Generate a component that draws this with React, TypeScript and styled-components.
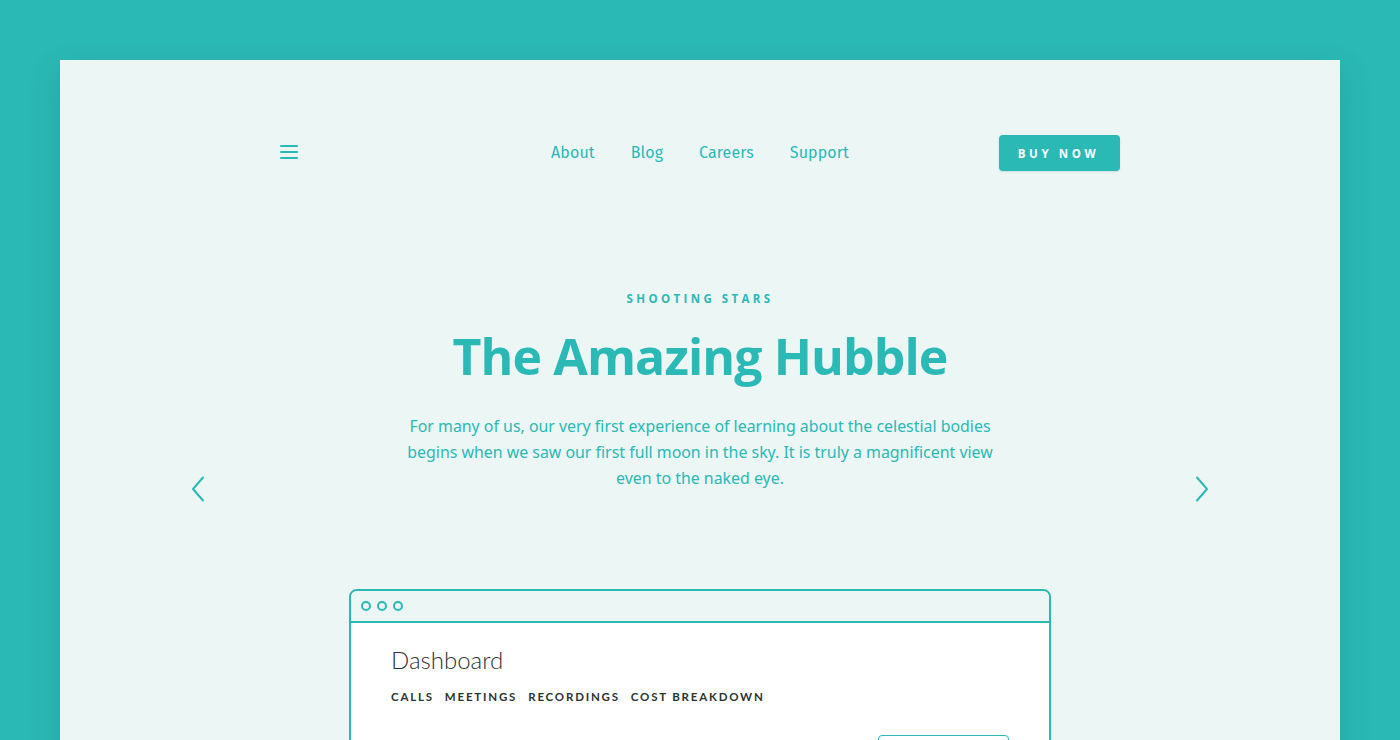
import React from "react";
import styled, { createGlobalStyle } from "styled-components";

const teal = "#2bb9b6";

const Global = createGlobalStyle`
  html, body { margin: 0; padding: 0; }
  body {
    background: ${teal};
    font-family: "Fira Sans", "Open Sans", "Noto Sans", sans-serif;
    overflow: hidden;
  }
`;

const Page = styled.div`
  width: 1400px;
  height: 740px;
  padding: 60px 60px 0;
  box-sizing: border-box;
  overflow: hidden;
`;

const Card = styled.div`
  background: #ecf6f5;
  height: 760px;
  box-shadow: 0 10px 30px rgba(0, 70, 70, 0.18);
  display: flex;
  flex-direction: column;
  align-items: center;
`;

const Nav = styled.nav`
  width: 840px;
  margin-top: 75px;
  height: 36px;
  display: grid;
  grid-template-columns: 1fr auto 1fr;
  align-items: center;
`;

const Burger = styled.button`
  justify-self: start;
  background: none;
  border: 0;
  padding: 0;
  width: 18px;
  height: 14px;
  margin-top: -2px;
  display: flex;
  flex-direction: column;
  justify-content: space-between;
  cursor: pointer;
  span {
    display: block;
    height: 2px;
    background: ${teal};
    border-radius: 1px;
  }
`;

const Links = styled.div`
  display: flex;
  gap: 36px;
  margin-top: -2px;
`;

const NavLink = styled.a`
  color: ${teal};
  font-family: "Fira Sans", "Open Sans", sans-serif;
  font-size: 16px;
  text-decoration: none;
  letter-spacing: 0.1px;
`;

const BuyButton = styled.button`
  justify-self: end;
  width: 121px;
  height: 36px;
  background: ${teal};
  color: #fff;
  border: 0;
  border-radius: 4px;
  font-family: "Open Sans", sans-serif;
  font-weight: 700;
  font-size: 11.5px;
  letter-spacing: 3.6px;
  padding-left: 4px;
  box-shadow: 0 1px 2px rgba(0, 80, 80, 0.15);
`;

const Hero = styled.section`
  width: 1034px;
  margin-top: 120px;
  display: grid;
  grid-template-columns: 30px 1fr 30px;
  align-items: start;
`;

const HeroText = styled.div`
  display: flex;
  flex-direction: column;
  align-items: center;
  text-align: center;
  color: ${teal};
`;

const Eyebrow = styled.div`
  font-family: "Open Sans", sans-serif;
  font-size: 11.5px;
  font-weight: 700;
  letter-spacing: 3.4px;
  line-height: 16px;
`;

const Title = styled.h1`
  margin: 17px 0 0;
  font-family: "Open Sans", sans-serif;
  font-weight: 700;
  font-size: 50px;
  letter-spacing: -0.9px;
  line-height: 64px;
`;

const Lead = styled.p`
  margin: 25px 0 0;
  width: 600px;
  font-family: "Noto Sans", sans-serif;
  font-size: 15.9px;
  line-height: 26px;
`;

const Arrow = styled.button`
  background: none;
  border: 0;
  padding: 0;
  margin-top: 185px;
  display: flex;
  justify-content: center;
  svg { display: block; }
`;

const Browser = styled.div`
  margin-top: 87px;
  width: 702px;
  border: 2px solid ${teal};
  border-radius: 8px 8px 0 0;
  box-sizing: border-box;
  background: #fff;
  overflow: hidden;
  flex: 1;
`;

const BrowserBar = styled.div`
  height: 30px;
  background: #ecf6f5;
  border-bottom: 2px solid ${teal};
  display: flex;
  align-items: center;
  gap: 6px;
  padding-left: 10px;
`;

const Dot = styled.span`
  width: 6px;
  height: 6px;
  border: 2px solid ${teal};
  border-radius: 50%;
`;

const DashBody = styled.div`
  padding: 24px 40px 0;
  display: flex;
  flex-direction: column;
`;

const DashTitle = styled.h2`
  margin: 0;
  font-family: "Lato", sans-serif;
  font-weight: 300;
  font-size: 24px;
  color: #2a3432;
  line-height: 26px;
`;

const Tabs = styled.div`
  margin-top: 17px;
  display: flex;
  gap: 11px;
`;

const Tab = styled.span`
  font-family: "Lato", sans-serif;
  font-weight: 700;
  font-size: 11.5px;
  letter-spacing: 1.8px;
  color: #2a3432;
`;

const Row = styled.div`
  display: flex;
  justify-content: flex-end;
  margin-top: 32px;
`;

const Select = styled.div`
  width: 129px;
  height: 30px;
  border: 1px solid ${teal};
  border-radius: 4px;
`;

export default function App() {
  return (
    <>
      <Global />
      <Page>
        <Card>
          <Nav>
            <Burger aria-label="menu">
              <span />
              <span />
              <span />
            </Burger>
            <Links>
              <NavLink>About</NavLink>
              <NavLink>Blog</NavLink>
              <NavLink>Careers</NavLink>
              <NavLink>Support</NavLink>
            </Links>
            <BuyButton>BUY NOW</BuyButton>
          </Nav>
          <Hero>
            <Arrow aria-label="previous">
              <svg width="14" height="26" viewBox="0 0 14 26" fill="none">
                <path d="M12 1.5 L2 13 L12 24.5" stroke={teal} strokeWidth="2" strokeLinecap="round" strokeLinejoin="round" />
              </svg>
            </Arrow>
            <HeroText>
              <Eyebrow>SHOOTING STARS</Eyebrow>
              <Title>The Amazing Hubble</Title>
              <Lead>
                For many of us, our very first experience of learning about the celestial bodies begins when we saw our
                first full moon in the sky. It is truly a magnificent view even to the naked eye.
              </Lead>
            </HeroText>
            <Arrow aria-label="next">
              <svg width="14" height="26" viewBox="0 0 14 26" fill="none">
                <path d="M2 1.5 L12 13 L2 24.5" stroke={teal} strokeWidth="2" strokeLinecap="round" strokeLinejoin="round" />
              </svg>
            </Arrow>
          </Hero>
          <Browser>
            <BrowserBar>
              <Dot />
              <Dot />
              <Dot />
            </BrowserBar>
            <DashBody>
              <DashTitle>Dashboard</DashTitle>
              <Tabs>
                <Tab>CALLS</Tab>
                <Tab>MEETINGS</Tab>
                <Tab>RECORDINGS</Tab>
                <Tab>COST BREAKDOWN</Tab>
              </Tabs>
              <Row>
                <Select />
              </Row>
            </DashBody>
          </Browser>
        </Card>
      </Page>
    </>
  );
}
